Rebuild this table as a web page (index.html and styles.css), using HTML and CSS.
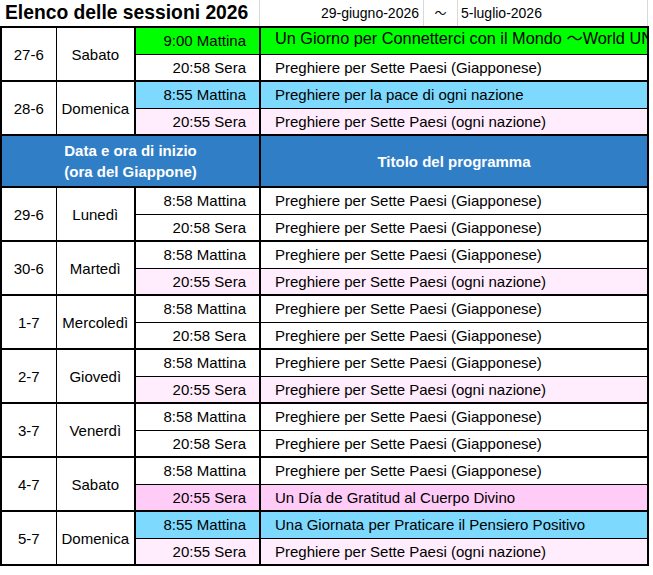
FILE: index.html
```html
<!DOCTYPE html>
<html lang="it">
<head>
<meta charset="utf-8">
<title>Elenco delle sessioni 2026</title>
<link rel="stylesheet" href="styles.css">
</head>
<body>
<div class="topbar">
  <div class="tb-title">Elenco delle sessioni 2026</div>
  <div class="tb-from">29-giugno-2026</div>
  <div class="tb-sep">～</div>
  <div class="tb-to">5-luglio-2026</div>
</div>
<table class="schedule">
  <colgroup>
    <col class="c-date"><col class="c-day"><col class="c-time"><col class="c-prog">
  </colgroup>
  <tbody>
    <tr class="first"><td class="date" rowspan="2">27-6</td><td class="day" rowspan="2">Sabato</td><td class="time green">9:00 Mattina</td><td class="prog green big">Un Giorno per Connetterci con il Mondo ～World UNITY～</td></tr>
    <tr class="second"><td class="time">20:58 Sera</td><td class="prog">Preghiere per Sette Paesi (Giapponese)</td></tr>

    <tr class="first"><td class="date" rowspan="2">28-6</td><td class="day" rowspan="2">Domenica</td><td class="time blue">8:55 Mattina</td><td class="prog blue">Preghiere per la pace di ogni nazione</td></tr>
    <tr class="second"><td class="time pale">20:55 Sera</td><td class="prog pale">Preghiere per Sette Paesi (ogni nazione)</td></tr>

    <tr class="head"><th colspan="3">Data e ora di inizio<br>(ora del Giappone)</th><th>Titolo del programma</th></tr>

    <tr class="first"><td class="date" rowspan="2">29-6</td><td class="day" rowspan="2">Lunedì</td><td class="time">8:58 Mattina</td><td class="prog">Preghiere per Sette Paesi (Giapponese)</td></tr>
    <tr class="second"><td class="time">20:58 Sera</td><td class="prog">Preghiere per Sette Paesi (Giapponese)</td></tr>

    <tr class="first"><td class="date" rowspan="2">30-6</td><td class="day" rowspan="2">Martedì</td><td class="time">8:58 Mattina</td><td class="prog">Preghiere per Sette Paesi (Giapponese)</td></tr>
    <tr class="second"><td class="time pale">20:55 Sera</td><td class="prog pale">Preghiere per Sette Paesi (ogni nazione)</td></tr>

    <tr class="first"><td class="date" rowspan="2">1-7</td><td class="day" rowspan="2">Mercoledì</td><td class="time">8:58 Mattina</td><td class="prog">Preghiere per Sette Paesi (Giapponese)</td></tr>
    <tr class="second"><td class="time">20:58 Sera</td><td class="prog">Preghiere per Sette Paesi (Giapponese)</td></tr>

    <tr class="first"><td class="date" rowspan="2">2-7</td><td class="day" rowspan="2">Giovedì</td><td class="time">8:58 Mattina</td><td class="prog">Preghiere per Sette Paesi (Giapponese)</td></tr>
    <tr class="second"><td class="time pale">20:55 Sera</td><td class="prog pale">Preghiere per Sette Paesi (ogni nazione)</td></tr>

    <tr class="first"><td class="date" rowspan="2">3-7</td><td class="day" rowspan="2">Venerdì</td><td class="time">8:58 Mattina</td><td class="prog">Preghiere per Sette Paesi (Giapponese)</td></tr>
    <tr class="second"><td class="time">20:58 Sera</td><td class="prog">Preghiere per Sette Paesi (Giapponese)</td></tr>

    <tr class="first"><td class="date" rowspan="2">4-7</td><td class="day" rowspan="2">Sabato</td><td class="time">8:58 Mattina</td><td class="prog">Preghiere per Sette Paesi (Giapponese)</td></tr>
    <tr class="second"><td class="time pink">20:55 Sera</td><td class="prog pink">Un Día de Gratitud al Cuerpo Divino</td></tr>

    <tr class="first"><td class="date" rowspan="2">5-7</td><td class="day" rowspan="2">Domenica</td><td class="time blue">8:55 Mattina</td><td class="prog blue">Una Giornata per Praticare il Pensiero Positivo</td></tr>
    <tr class="second"><td class="time pale">20:55 Sera</td><td class="prog pale">Preghiere per Sette Paesi (ogni nazione)</td></tr>
  </tbody>
</table>
</body>
</html>
```
FILE: styles.css
```css
html, body {
  margin: 0;
  padding: 0;
  background: #ffffff;
}
body {
  font-family: "Liberation Sans", Arial, "Noto Sans CJK JP", sans-serif;
  color: #000000;
}

/* Title bar */
.topbar {
  display: flex;
  height: 26px;
}
.topbar > div {
  box-sizing: border-box;
  height: 26px;
  line-height: 26px;
  white-space: nowrap;
  border-right: 1px solid #d9d9d9;
}
.tb-title {
  width: 260px;
  padding-left: 5px;
  font-weight: bold;
  font-size: 19.3px;
}
.tb-from {
  width: 164px;
  text-align: right;
  padding-right: 4px;
  font-size: 14px;
}
.tb-sep {
  width: 34px;
  text-align: center;
  font-size: 12px;
  font-family: "Noto Sans CJK JP", sans-serif;
}
.tb-to {
  width: 190px;
  padding-left: 3px;
  font-size: 14px;
}

/* Schedule table */
.schedule {
  border-collapse: collapse;
  table-layout: fixed;
  width: 647px;
  border: 2px solid #000;
  font-size: 15px;
}
.c-date { width: 55px; }
.c-day { width: 79px; }
.c-time { width: 125px; }
.c-prog { width: 388px; }

.schedule tr { height: 27px; }
.schedule td {
  padding: 0;
  border: 1px solid #000;
  white-space: nowrap;
  overflow: hidden;
  line-height: 17px;
  background: #ffffff;
}
.schedule tr.first td { border-top: 2px solid #000; }
.schedule td.date { text-align: center; border-bottom: 2px solid #000; }
.schedule td.day { text-align: center; border-right: 2px solid #000; border-bottom: 2px solid #000; }
.schedule td.time {
  text-align: right;
  padding-right: 13px;
  border-right: 2px solid #000;
}
.schedule td.prog {
  text-align: left;
  padding-left: 14px;
  border-right: 2px solid #000;
}
.schedule td.big {
  font-size: 16.3px;
  padding-bottom: 4px;
}

.schedule td.green { background: #00ff00; }
.schedule td.blue { background: #7dd9fd; }
.schedule td.pale { background: #ffecfc; }
.schedule td.pink { background: #ffccf8; }

.schedule tr.head { height: 52px; }
.schedule tr.head th {
  background: #2f7ec6;
  color: #ffffff;
  font-weight: bold;
  font-size: 15px;
  line-height: 21px;
  text-align: center;
  padding: 0;
  border: 2px solid #000;
}
```
